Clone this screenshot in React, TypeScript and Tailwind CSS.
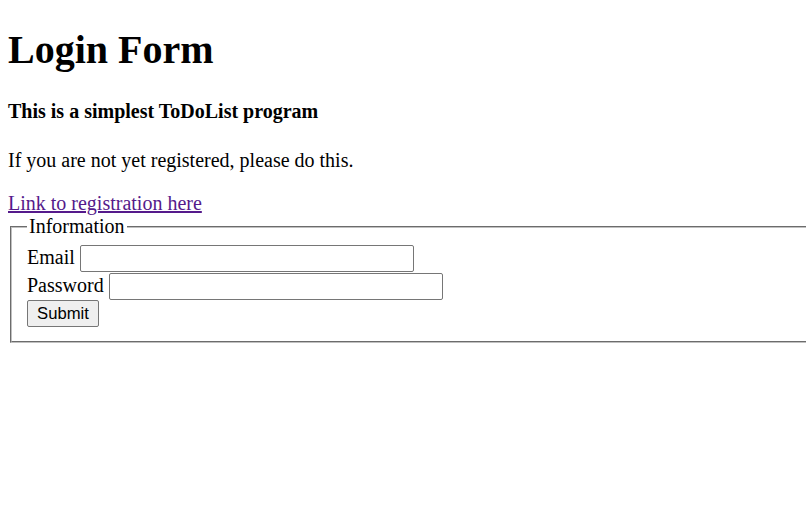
export default function App() {
  return (
    <div className="w-full min-h-screen overflow-hidden bg-white px-[8px] pt-[27px] text-black font-['Liberation_Serif','Times_New_Roman',serif]">
      <h1 className="text-[40px] leading-[46px] font-bold">Login Form</h1>
      <h4 className="mt-[27px] text-[20px] leading-[23px] font-bold">This is a simplest ToDoList program</h4>
      <p className="mt-[26px] text-[20px] leading-[23px]">If you are not yet registered, please do this.</p>
      <div className="mt-[20px] text-[20px] leading-[23px]">
        <a href="#" className="text-[#551a8b] underline">
          Link to registration here
        </a>
      </div>
      <form onSubmit={(e) => e.preventDefault()}>
        <fieldset className="ml-[2px] w-[830px] border-2 [border-style:groove] border-[#c0c0c0] px-[15px] pb-[14px] pt-[7px]">
          <legend className="px-[2px] text-[20px] leading-[23px]">Information</legend>
          <div className="flex flex-col text-[20px] leading-[23px]">
            <label className="flex h-[28px] items-start gap-[5px]">
              <span className="pt-[1px]">Email</span>
              <input
                type="email"
                className="h-[27px] w-[334px] rounded-[2px] border border-[#767676] bg-white px-[2px]"
              />
            </label>
            <label className="flex h-[27px] items-start gap-[5px]">
              <span className="pt-[1px]">Password</span>
              <input
                type="password"
                className="h-[27px] w-[334px] rounded-[2px] border border-[#767676] bg-white px-[2px]"
              />
            </label>
            <div>
              <button
                type="submit"
                className="h-[27px] w-[72px] rounded-[2px] border border-[#767676] bg-[#efefef] text-[16.67px] leading-[19px] font-['Liberation_Sans',Arial,sans-serif]"
              >
                Submit
              </button>
            </div>
          </div>
        </fieldset>
      </form>
    </div>
  );
}
